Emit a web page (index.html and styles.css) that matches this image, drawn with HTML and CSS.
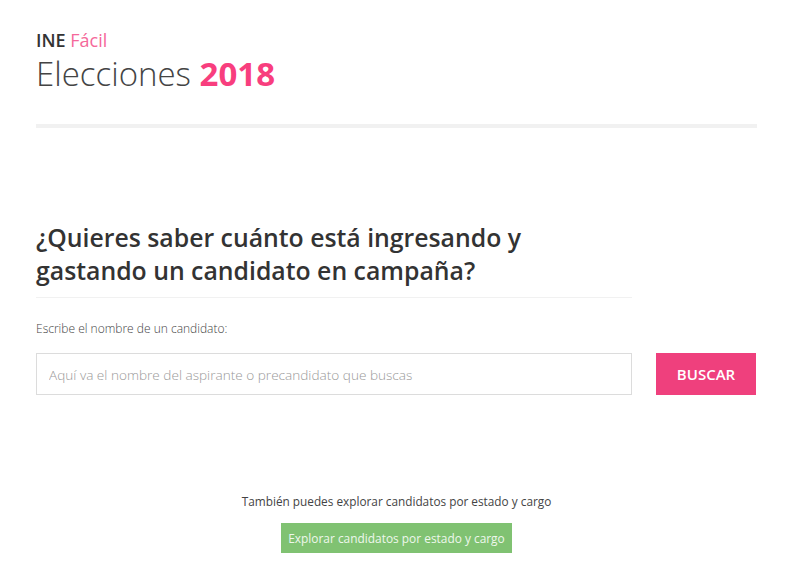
FILE: index.html
```html
<!DOCTYPE html>
<html lang="es">
<head>
<meta charset="UTF-8">
<title>INE Fácil - Elecciones 2018</title>
<link rel="stylesheet" href="styles.css">
</head>
<body>

<div class="wrap">

<!-- HEADER -->
<header class="top">
  <div class="brand"><strong>INE</strong> <span>Fácil</span></div>
  <h1>Elecciones <strong>2018</strong></h1>
</header>

<!-- BUSCADOR -->
<section class="search">
  <h2>¿Quieres saber cuánto está ingresando y gastando un candidato en campaña?</h2>
  <label for="q">Escribe el nombre de un candidato:</label>
  <div class="row">
    <input type="text" id="q" placeholder="Aquí va el nombre del aspirante o precandidato que buscas">
    <button class="btn-buscar">BUSCAR</button>
  </div>
</section>

<!-- EXPLORAR -->
<section class="explore">
  <p>También puedes explorar candidatos por estado y cargo</p>
  <a href="#" class="btn-explorar">Explorar candidatos por estado y cargo</a>
</section>

</div>

</body>
</html>
```

FILE: styles.css
```css
*{
  margin:0;
  padding:0;
  box-sizing:border-box;
}

body{
  background:#fff;
  font-family:"Open Sans", sans-serif;
  color:#333;
}

.wrap{
  width:721px;
  margin-left:36px;
}

/* HEADER */
.top{
  padding-top:30px;
  padding-bottom:30px;
  border-bottom:4px solid #f1f1f1;
}

.brand{
  font-size:18px;
  line-height:20px;
  color:#333;
}

.brand strong{
  font-weight:600;
}

.brand span{
  color:#f5689a;
}

.top h1{
  margin-top:4px;
  font-size:33px;
  font-weight:300;
  line-height:40px;
  color:#444;
}

.top h1 strong{
  font-weight:700;
  color:#f83e7e;
}

/* BUSCADOR */
.search{
  padding-top:93px;
}

.search h2{
  width:596px;
  font-size:24.8px;
  font-weight:600;
  line-height:33px;
  color:#333;
  padding-bottom:10px;
  border-bottom:1px solid #f1f1f1;
  margin-bottom:22px;
}

.search label{
  display:block;
  font-size:12px;
  font-weight:300;
  color:#444;
  margin-bottom:16px;
}

.row{
  display:flex;
  gap:24px;
}

.row input{
  width:596px;
  height:42px;
  border:1px solid #dcdcdc;
  padding:0 12px;
  font-family:"Open Sans", sans-serif;
  font-size:13.6px;
  font-weight:300;
  color:#333;
  outline:none;
}

.row input::placeholder{
  color:#999;
}

.btn-buscar{
  width:100px;
  height:42px;
  background:#ef407d;
  color:#fff;
  border:none;
  font-family:"Open Sans", sans-serif;
  font-size:15px;
  font-weight:600;
  cursor:pointer;
}

/* EXPLORAR */
.explore{
  padding-top:98px;
  text-align:center;
}

.explore p{
  font-size:11.8px;
  color:#444;
  margin-bottom:14px;
}

.btn-explorar{
  display:inline-block;
  padding:0 7px;
  height:30px;
  line-height:30px;
  background:#80c272;
  color:#eef7ec;
  font-size:11.9px;
  text-decoration:none;
}
```
